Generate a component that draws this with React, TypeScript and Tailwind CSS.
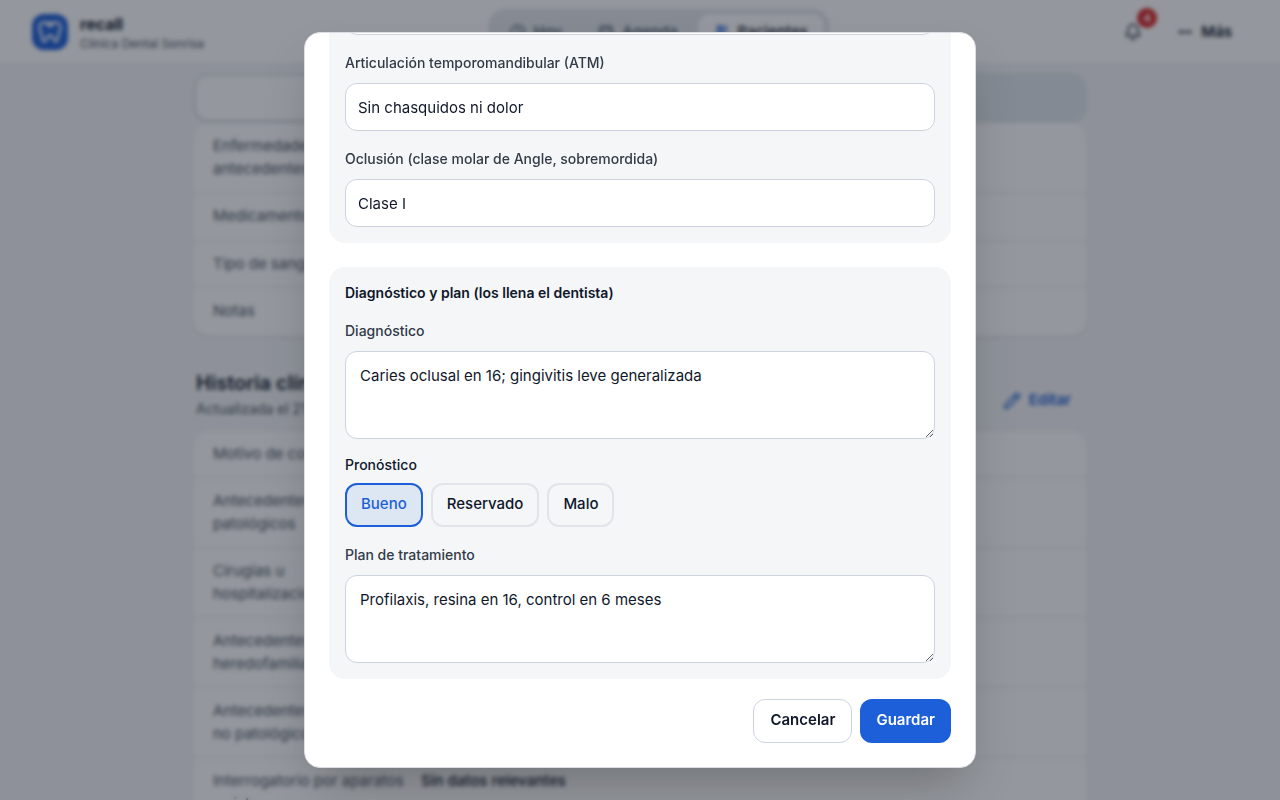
import { Bell, Calendar, Clock, Ellipsis, Pencil, Users } from "lucide-react";
import type { ReactNode } from "react";

function ToothLogo() {
  return (
    <span className="flex size-9 items-center justify-center rounded-xl bg-[#1d5fd8]">
      <svg viewBox="0 0 24 24" className="size-7" fill="none" stroke="white" strokeWidth="2" strokeLinecap="round" strokeLinejoin="round" aria-hidden="true">
        <path d="M7.500 3.500C4.700 3.500 3 5.500 3 8.300c0 2.200 1 3.500 1.500 5.400.5 2 .6 6.800 2.500 6.800 2 0 1.700-5.500 5-5.500s3 5.500 5 5.500c1.900 0 2-4.800 2.500-6.800.5-1.900 1.500-3.200 1.500-5.400 0-2.800-1.700-4.800-4.500-4.800-1.800 0-2.700 1-4.500 1s-2.700-1-4.500-1z" />
        <path d="M9.500 5.500c1.500 1.800 3.500 1.800 5 0" />
      </svg>
    </span>
  );
}

function Header() {
  return (
    <header className="relative z-10 flex h-[65px] shrink-0 items-center justify-between border-b border-[#e5e7eb] bg-white/95 px-8">
      <div className="flex items-center gap-3">
        <ToothLogo />
        <div>
          <p className="text-base leading-6 font-bold">recall</p>
          <p className="text-xs leading-4 text-[#4b5563]">Clínica Dental Sonrisa</p>
        </div>
      </div>
      <nav className="flex gap-1 rounded-2xl border border-[#dce0e6] bg-[#e4e8ed] p-1 text-[15px] font-medium text-[#4b5563]">
        <a href="#hoy" className="flex h-9 items-center gap-2 rounded-xl px-4"><Clock className="size-4" />Hoy</a>
        <a href="#agenda" className="flex h-9 items-center gap-2 rounded-xl px-4"><Calendar className="size-4" />Agenda</a>
        <a href="#pacientes" className="flex h-9 items-center gap-2 rounded-xl bg-white px-4 text-[#0f172a]"><Users className="size-4 fill-[#1d5fd8]/50 text-[#1d5fd8]" />Pacientes</a>
      </nav>
      <div className="flex items-center gap-2">
        <button type="button" aria-label="Notificaciones" className="relative flex size-10 items-center justify-center">
          <Bell className="size-[18px]" />
          <span className="absolute -top-1 -right-1 flex size-5 items-center justify-center rounded-full bg-[#d62828] text-[11px] font-bold text-white">4</span>
        </button>
        <button type="button" className="flex items-center gap-2 px-4 text-[15px] font-semibold"><Ellipsis className="size-4" strokeWidth={3} />Más</button>
      </div>
    </header>
  );
}

type Entry = { label: ReactNode; value?: string };

const antecedentes: Entry[] = [
  { label: <>Enfermedades y<br />antecedentes</> },
  { label: "Medicamentos" },
  { label: "Tipo de sangre" },
  { label: "Notas" },
];

const historia: Entry[] = [
  { label: "Motivo de consulta" },
  { label: <>Antecedentes<br />patológicos</> },
  { label: <>Cirugías u<br />hospitalizaciones</> },
  { label: <>Antecedentes<br />heredofamiliares</> },
  { label: <>Antecedentes<br />no patológicos</> },
  { label: <>Interrogatorio por aparatos<br />y sistemas</>, value: "Sin datos relevantes" },
];

function RecordList({ entries }: { entries: Entry[] }) {
  return (
    <dl className="rounded-2xl bg-white shadow-sm">
      {entries.map((entry, i) => (
        <div key={i} className="flex gap-4 border-b border-[#e5e7eb] px-5 py-3 text-[15px] leading-normal last:border-transparent">
          <dt className="w-48 shrink-0 whitespace-nowrap text-[#4b5563]">{entry.label}</dt>
          <dd className="font-medium">{entry.value}</dd>
        </div>
      ))}
    </dl>
  );
}

function PatientRecord() {
  return (
    <main className="mx-auto w-full max-w-[894px]">
      <div className="relative z-10 mt-2 grid grid-cols-2 rounded-2xl bg-[#e2e8ed] p-[3px]">
        <div className="h-11 rounded-xl bg-white shadow-sm" />
      </div>
      <RecordList entries={antecedentes} />
      <div className="mt-[33px] mb-2.5 flex items-center justify-between pr-4 pl-[3px]">
        <div>
          <h2 className="text-xl leading-7 font-semibold">Historia clínica</h2>
          <p className="text-sm leading-6 text-[#4b5563]">Actualizada el 21</p>
        </div>
        <button type="button" className="mt-3 flex items-center gap-2 text-[15px] font-semibold text-[#1d5fd8]"><Pencil className="size-[18px]" />Editar</button>
      </div>
      <RecordList entries={historia} />
    </main>
  );
}

function TextField({ id, label, value }: { id: string; label: string; value: string }) {
  return (
    <div>
      <label htmlFor={id} className="mb-2.5 block text-sm leading-5 font-medium text-[#323b47]">{label}</label>
      <input id={id} defaultValue={value} className="block h-12 w-full rounded-xl border border-[#ccd2de] bg-white px-3 text-[15px]" />
    </div>
  );
}

function AreaField({ id, label, value }: { id: string; label: string; value: string }) {
  return (
    <div>
      <label htmlFor={id} className="mb-2.5 block text-sm leading-5 font-medium text-[#323b47]">{label}</label>
      <textarea id={id} defaultValue={value} className="block h-22 w-full resize rounded-xl border border-[#ccd2de] bg-white px-3.5 py-3 text-[15px] leading-6" />
    </div>
  );
}

function Prognosis() {
  return (
    <fieldset className="pb-0.5">
      <legend className="mb-2 text-sm leading-5 font-medium">Pronóstico</legend>
      <div className="flex gap-2">
        {["Bueno", "Reservado", "Malo"].map((option) => (
          <label key={option} className="flex h-11 items-center rounded-xl border-2 border-[#e2e4e9] px-3.5 pb-0.5 text-[15px] font-medium has-checked:border-[#1d5fd8] has-checked:bg-[#dde7f4] has-checked:text-[#1d5fd8]">
            <input type="radio" name="pronostico" defaultChecked={option === "Bueno"} className="sr-only" />
            {option}
          </label>
        ))}
      </div>
    </fieldset>
  );
}

function EditDialog() {
  return (
    <div className="fixed inset-0 z-20 flex justify-center bg-[#111926]/45 p-8 backdrop-blur-[2px]">
      <form role="dialog" aria-modal="true" aria-label="Historia clínica" className="flex w-full max-w-[672px] flex-col justify-end overflow-hidden rounded-2xl border border-[#d9dde3] bg-white px-6 pb-6 shadow-2xl">
        <section className="flex flex-col gap-[18px] rounded-b-2xl bg-[#f4f6f8] px-4 pb-4">
          <input aria-label="Tejidos blandos" className="block h-12 w-full shrink-0 rounded-xl border border-[#ccd2de] bg-white px-3 text-[15px]" />
          <TextField id="atm" label="Articulación temporomandibular (ATM)" value="Sin chasquidos ni dolor" />
          <TextField id="oclusion" label="Oclusión (clase molar de Angle, sobremordida)" value="Clase I" />
        </section>
        <section className="mt-6 flex flex-col gap-4 rounded-2xl bg-[#f4f6f8] p-4">
          <h3 className="mb-0.5 text-sm leading-5 font-semibold">Diagnóstico y plan (los llena el dentista)</h3>
          <AreaField id="diagnostico" label="Diagnóstico" value="Caries oclusal en 16; gingivitis leve generalizada" />
          <Prognosis />
          <AreaField id="plan" label="Plan de tratamiento" value="Profilaxis, resina en 16, control en 6 meses" />
        </section>
        <div className="mt-5 flex justify-end gap-2 text-[15px] font-semibold">
          <button type="button" className="h-11 rounded-xl border border-[#ccd2de] px-4 pb-0.5">Cancelar</button>
          <button type="submit" className="h-11 rounded-xl bg-[#1d5fd8] px-4 pb-0.5 text-white">Guardar</button>
        </div>
      </form>
    </div>
  );
}

export default function App() {
  return (
    <div className="flex h-screen flex-col overflow-hidden bg-[#f4f5f7] font-['Inter','Liberation_Sans',sans-serif] text-[#0f172a]">
      <Header />
      <PatientRecord />
      <EditDialog />
    </div>
  );
}
